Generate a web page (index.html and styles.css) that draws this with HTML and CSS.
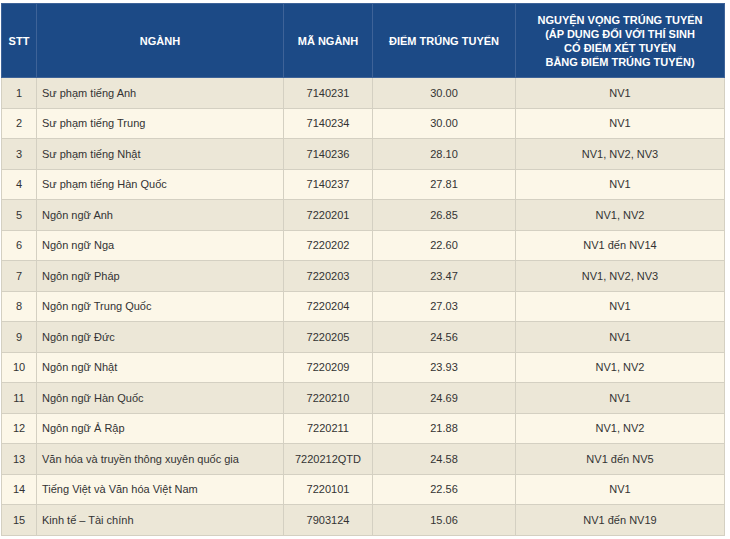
FILE: index.html
```html
<!DOCTYPE html>
<html lang="vi">
<head>
<meta charset="utf-8">
<link rel="stylesheet" href="styles.css">
</head>
<body>
<div class="wrap">
<table class="tbl">
<colgroup>
<col class="c1"><col class="c2"><col class="c3"><col class="c4"><col class="c5">
</colgroup>
<thead>
<tr>
<th>STT</th>
<th>NGÀNH</th>
<th>MÃ NGÀNH</th>
<th>ĐIỂM TRÚNG TUYỂN</th>
<th>NGUYỆN VỌNG TRÚNG TUYỂN<br>(ÁP DỤNG ĐỐI VỚI THÍ SINH<br>CÓ ĐIỂM XÉT TUYỂN<br>BẰNG ĐIỂM TRÚNG TUYỂN)</th>
</tr>
</thead>
<tbody>
<tr><td>1</td><td class="l">Sư phạm tiếng Anh</td><td>7140231</td><td>30.00</td><td>NV1</td></tr>
<tr><td>2</td><td class="l">Sư phạm tiếng Trung</td><td>7140234</td><td>30.00</td><td>NV1</td></tr>
<tr><td>3</td><td class="l">Sư phạm tiếng Nhật</td><td>7140236</td><td>28.10</td><td>NV1, NV2, NV3</td></tr>
<tr><td>4</td><td class="l">Sư phạm tiếng Hàn Quốc</td><td>7140237</td><td>27.81</td><td>NV1</td></tr>
<tr><td>5</td><td class="l">Ngôn ngữ Anh</td><td>7220201</td><td>26.85</td><td>NV1, NV2</td></tr>
<tr><td>6</td><td class="l">Ngôn ngữ Nga</td><td>7220202</td><td>22.60</td><td>NV1 đến NV14</td></tr>
<tr><td>7</td><td class="l">Ngôn ngữ Pháp</td><td>7220203</td><td>23.47</td><td>NV1, NV2, NV3</td></tr>
<tr><td>8</td><td class="l">Ngôn ngữ Trung Quốc</td><td>7220204</td><td>27.03</td><td>NV1</td></tr>
<tr><td>9</td><td class="l">Ngôn ngữ Đức</td><td>7220205</td><td>24.56</td><td>NV1</td></tr>
<tr><td>10</td><td class="l">Ngôn ngữ Nhật</td><td>7220209</td><td>23.93</td><td>NV1, NV2</td></tr>
<tr><td>11</td><td class="l">Ngôn ngữ Hàn Quốc</td><td>7220210</td><td>24.69</td><td>NV1</td></tr>
<tr><td>12</td><td class="l">Ngôn ngữ Ả Rập</td><td>7220211</td><td>21.88</td><td>NV1, NV2</td></tr>
<tr><td>13</td><td class="l">Văn hóa và truyền thông xuyên quốc gia</td><td>7220212QTD</td><td>24.58</td><td>NV1 đến NV5</td></tr>
<tr><td>14</td><td class="l">Tiếng Việt và Văn hóa Việt Nam</td><td>7220101</td><td>22.56</td><td>NV1</td></tr>
<tr><td>15</td><td class="l">Kinh tế – Tài chính</td><td>7903124</td><td>15.06</td><td>NV1 đến NV19</td></tr>
</tbody>
</table>
</div>
</body>
</html>
```

FILE: styles.css
```css
html, body {
  margin: 0;
  padding: 0;
  background: #ffffff;
}
.wrap {
  padding: 3px 0 0 1px;
}
.tbl {
  border-collapse: collapse;
  table-layout: fixed;
  width: 723px;
  font-family: "Liberation Sans", Arial, sans-serif;
  font-size: 11px;
  color: #333333;
}
.c1 { width: 35px; }
.c2 { width: 247px; }
.c3 { width: 89px; }
.c4 { width: 143px; }
.c5 { width: 209px; }
.tbl th {
  background: #1c4a86;
  color: #ffffff;
  font-weight: bold;
  font-size: 11px;
  line-height: 14px;
  height: 73px;
  padding: 0 4px;
  border: 1px solid #3e6398;
  text-align: center;
  vertical-align: middle;
}
.tbl td {
  height: 29.5px;
  padding: 0 5px;
  border: 1px solid #d4d0c2;
  text-align: center;
  vertical-align: middle;
}
.tbl td.l {
  text-align: left;
}
.tbl tbody tr:nth-child(odd) td {
  background: #ece7d7;
}
.tbl tbody tr:nth-child(even) td {
  background: #fcf7e8;
}
```
